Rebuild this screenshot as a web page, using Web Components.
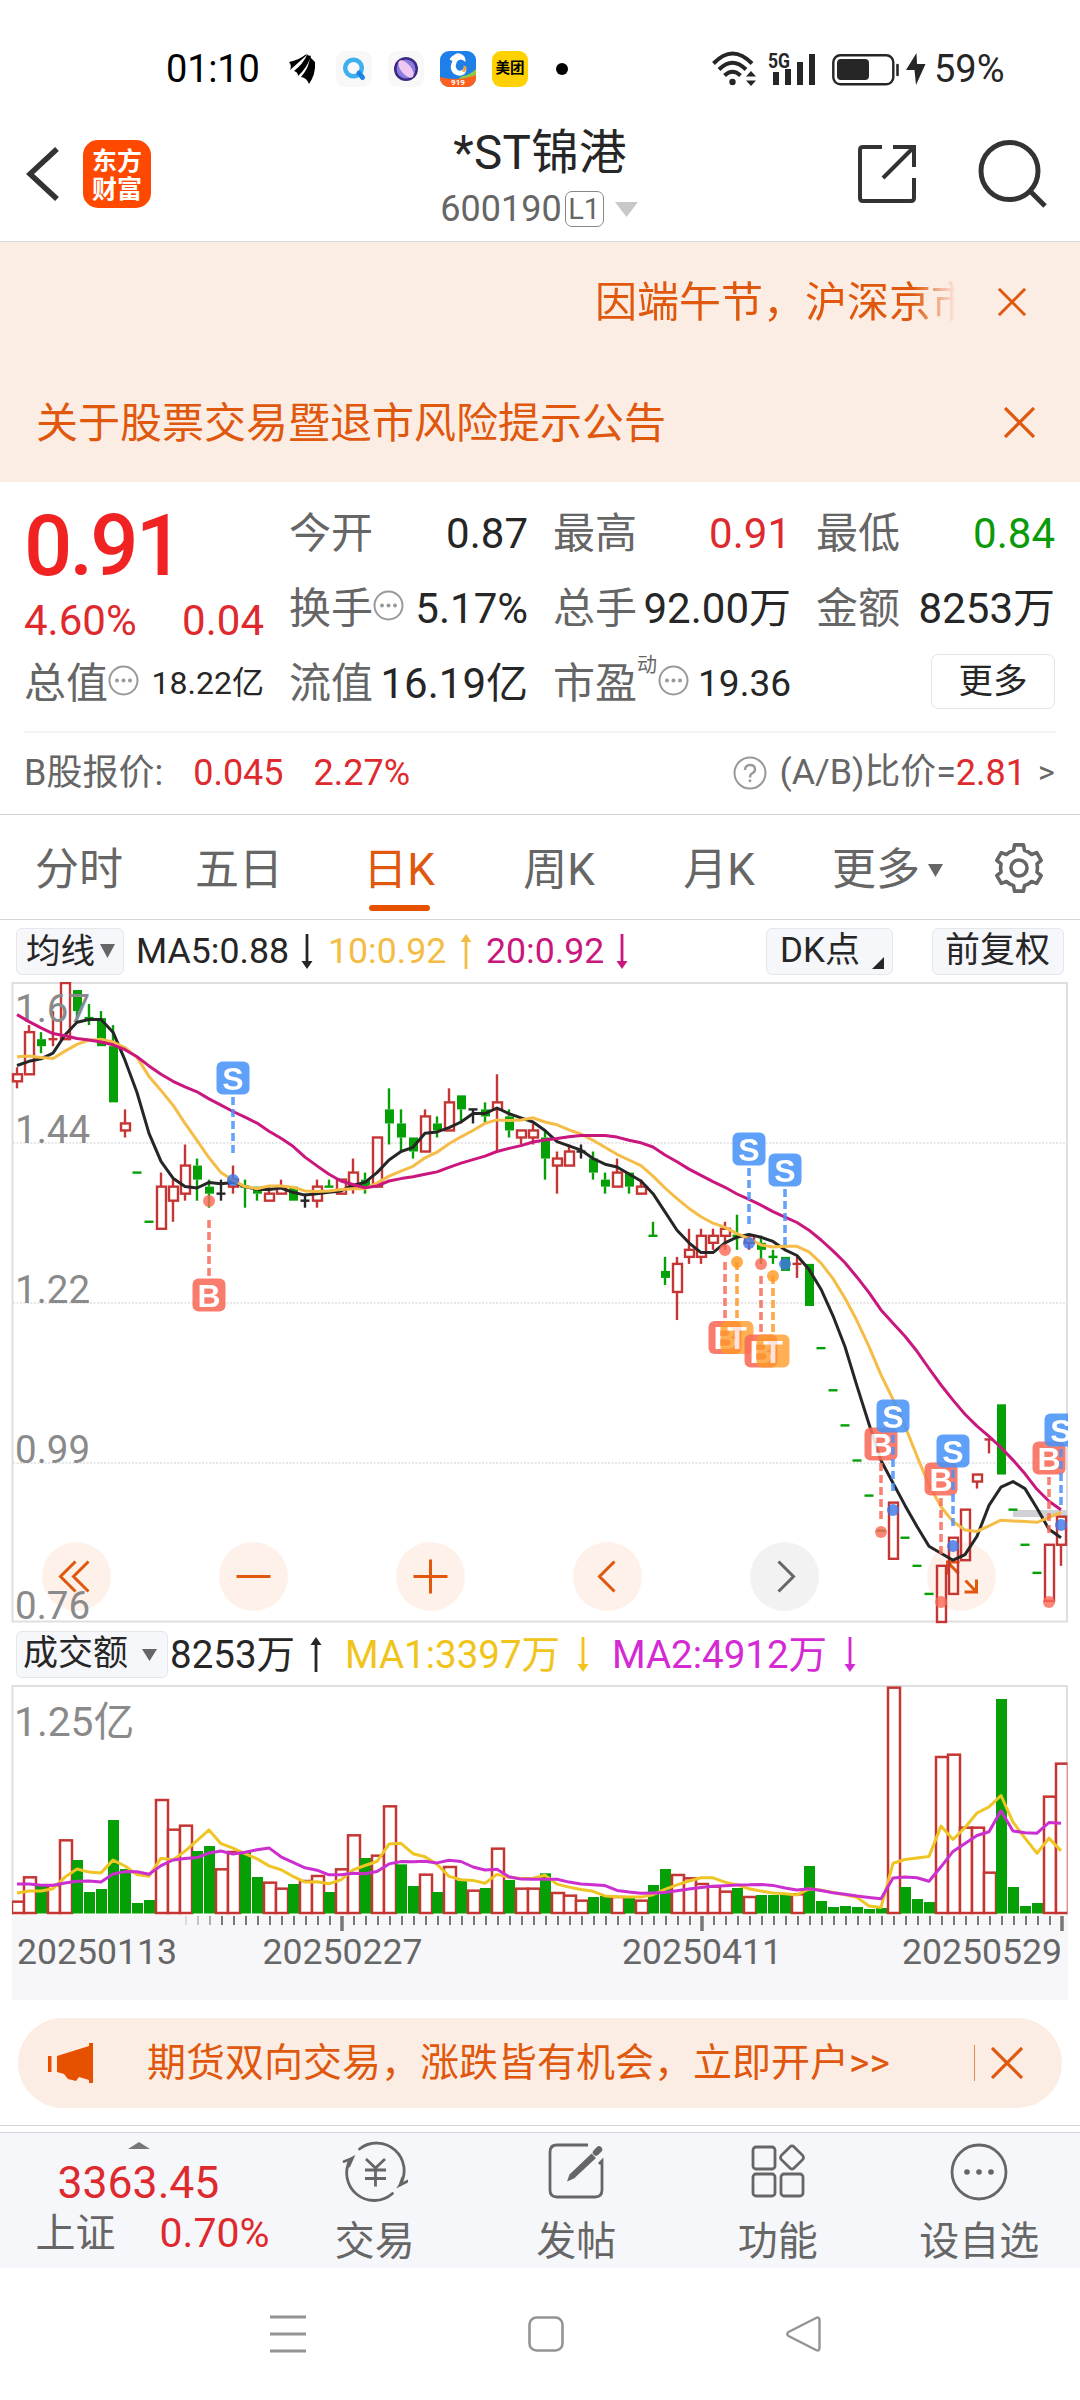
<!DOCTYPE html>
<html lang="zh-CN">
<head>
<meta charset="utf-8">
<title>*ST锦港 600190</title>
<style>
    html, body {
        margin: 0;
        padding: 0;
    }

    body {
        width: 1080px;
        height: 2400px;
        overflow: hidden;
        background: #fff;
        color: #262626;
        font-family: Roboto, "Noto Sans CJK SC", sans-serif;
        font-size: 42px;
        line-height: 1.17;
        --red: #de2a2e;
        --orange: #df580d;
        --gray: #666;
        --peach: #fcede4;
    }
</style>
</head>
<body>
<stock-page></stock-page>

<script>
// every element goes through here: open shadow root + its own markup
class BaseElement extends HTMLElement {
    constructor() {
        super();
        this.shadowDOM = this.attachShadow({ mode: 'open' });
    }

    connectedCallback() {
        this.shadowDOM.innerHTML = this.render();
    }
}

class StatusBar extends BaseElement {
    render() {
        return `
            <style>
                :host {
                    display: flex;
                    align-items: center;
                    height: 74px;
                    padding: 32px 74px 0 166px;
                    color: #000;
                }
                .time { width: 123px; font-size: 38px; letter-spacing: -0.2px; white-space: nowrap; }
                .app {
                    width: 36px;
                    height: 36px;
                    margin-left: 16px;
                    border-radius: 9px;
                    background: #f8f8f9;
                    overflow: hidden;
                }
                .first { margin-left: 20px; }
                .app svg { display: block; }
                .meituan {
                    background: #ffd100;
                    font-size: 14.5px;
                    font-weight: 700;
                    line-height: 36px;
                    text-align: center;
                }
                .dot { width: 12px; height: 12px; margin-left: 28px; border-radius: 50%; background: #000; }
                .right { display: flex; align-items: center; margin-left: auto; color: #262626; }
                .signal { margin-left: 10px; overflow: visible; }
                .battery { margin-left: 16px; }
                .bolt { margin-left: 6px; }
                .percent { width: 72px; margin-left: 8px; font-size: 38px; white-space: nowrap; }
            </style>
            <span class="time">01:10</span>
            <svg width="27" height="30" viewBox="0 0 27 30" fill="#000">
                <path d="M0 8Q10 6 16 1L19 0Q10 8 1 16Q3 11 0 8Z"/>
                <path d="M5 17Q14 10 18 1L22 2Q18 14 9 22Q9 18 5 17Z"/>
                <path d="M12 23Q20 14 21 3L26 8Q27 20 20 30Q18 24 12 23Z"/>
            </svg>
            <span class="app first">
                <svg width="36" height="36" viewBox="0 0 36 36">
                    <circle cx="17.500" cy="17" r="8.300" fill="none" stroke="#3fb0ee" stroke-width="4.500"/>
                    <path d="M23 22L26.500 26.500" stroke="#1f83e6" stroke-width="5" stroke-linecap="round"/>
                </svg>
            </span>
            <span class="app">
                <svg width="36" height="36" viewBox="0 0 36 36">
                    <circle cx="18" cy="18" r="12" fill="#3b2a80"/>
                    <circle cx="18" cy="18" r="9.500" fill="#8a7be0"/>
                    <ellipse cx="18" cy="18" rx="5" ry="10.500" fill="#f0c9f2" transform="rotate(-40 18 18)"/>
                </svg>
            </span>
            <span class="app">
                <svg width="36" height="36" viewBox="0 0 36 36">
                    <rect width="36" height="36" fill="#1f7fe8"/>
                    <path d="M22 25Q30 24 36 18V30H16Z" fill="#8fc64a"/>
                    <path d="M0 26Q18 31 36 24V36H0Z" fill="#ff5f1f"/>
                    <path d="M9.500 8.500Q11 5 14 4Q17 1 21 3Q26 5 25.500 11Q21 6.500 17.500 10Q14 15 17.500 19Q22 21.500 25 15Q28 19 24.500 23Q19 26.500 13.500 22.500Q8.500 17 12.500 10Q11 9 9.500 8.500Z" fill="#fff"/>
                    <path d="M23.500 14.500L26.500 15.500Q26.500 19 24.500 21.500L22 20Q24 18 23.500 14.500Z" fill="#f5a13c"/>
                    <text x="18" y="34" fill="#fff" font-size="8" font-weight="700" text-anchor="middle">919</text>
                </svg>
            </span>
            <span class="app meituan">美团</span>
            <span class="dot"></span>
            <div class="right">
                <svg width="46" height="36" viewBox="0 0 46 36" fill="none" stroke="#262626" stroke-width="4">
                    <path d="M1.500 12.500Q20.500 -7.500 40 12.500"/>
                    <path d="M7 18.500Q20.500 5 34 18.500"/>
                    <path d="M12.500 24.500Q20.500 17 28.500 24.500"/>
                    <circle cx="20.500" cy="31" r="3.200" fill="#262626" stroke="none"/>
                    <path d="M34 25.500L39 20L44 25.500ZM34 29.500L39 35L44 29.500Z" fill="#262626" stroke="none"/>
                </svg>
                <svg class="signal" width="48" height="36" viewBox="0 0 48 36" fill="#262626">
                    <text x="0" y="16.500" font-size="20" font-weight="700" textLength="22" lengthAdjust="spacingAndGlyphs">5G</text>
                    <path d="M5 21h6v13h-6zM17 18h6v16h-6zM29 11h6v23h-6zM41 3h6v31h-6z"/>
                </svg>
                <svg class="battery" width="68" height="36" viewBox="0 0 68 36">
                    <rect x="1.300" y="4.300" width="60" height="29" rx="7" fill="none" stroke="#262626" stroke-width="2.400"/>
                    <rect x="5" y="8" width="32" height="21" rx="4" fill="#262626"/>
                    <path d="M65.500 14V24" stroke="#262626" stroke-width="2.600" stroke-linecap="round"/>
                </svg>
                <svg class="bolt" width="20" height="32" viewBox="0 0 20 32">
                    <path d="M10.500 0L0 17H8.500L10 32L19.500 11H11Z" fill="#262626"/>
                </svg>
                <span class="percent">59%</span>
            </div>
        `;
    }
}
customElements.define('status-bar', StatusBar);

class StockHeader extends BaseElement {
    render() {
        return `
            <style>
                :host {
                    display: grid;
                    grid-template-columns: 1fr auto 1fr;
                    align-items: center;
                    height: 135px;
                    border-bottom: 1px solid #d8d8d8;
                }
                .left { display: flex; align-items: center; padding-left: 26px; gap: 23px; }
                .logo {
                    width: 68px;
                    height: 60px;
                    padding-top: 8px;
                    border-radius: 15px;
                    background: #ff4800;
                    color: #fff;
                    font-size: 25px;
                    font-weight: 700;
                    line-height: 28px;
                    text-align: center;
                }
                .title { padding-top: 15px; text-align: center; line-height: 56px; white-space: nowrap; }
                .name { font-size: 47.5px; letter-spacing: 0.3px; }
                .code { display: flex; align-items: center; justify-content: center; height: 56px; margin-left: -2px; color: var(--gray); font-size: 36px; }
                .level {
                    width: 37px;
                    height: 34px;
                    margin-left: 3px;
                    border: 1.5px solid #888;
                    border-radius: 7px;
                    font-size: 29px;
                    line-height: 35px;
                    text-align: center;
                }
                .code svg { margin: 0 0 0 11px; }
                .right { display: flex; align-items: center; justify-content: flex-end; gap: 62px; padding-right: 33px; }
            </style>
            <div class="left">
                <svg width="34" height="54" viewBox="0 0 34 54"><path d="M31 2L4 27L31 52" fill="none" stroke="#333" stroke-width="5.500"/></svg>
                <div class="logo">东方<br>财富</div>
            </div>
            <div class="title">
                <div class="name">*ST锦港</div>
                <div class="code">
                    <span>600190</span><span class="level">L1</span>
                    <svg width="23" height="15" viewBox="0 0 23 15"><path d="M0 0H23L11.500 15Z" fill="#c8c8c8"/></svg>
                </div>
            </div>
            <div class="right">
                <svg width="58" height="58" viewBox="0 0 58 58" fill="none" stroke="#333" stroke-width="4">
                    <path d="M24 2H5Q2 2 2 5V53Q2 56 5 56H53Q56 56 56 53V33"/>
                    <path d="M35 2H56V22M56 2L25 33"/>
                </svg>
                <svg width="69" height="69" viewBox="0 0 69 69" fill="none" stroke="#333" stroke-width="5">
                    <circle cx="31.500" cy="32" r="28.500"/>
                    <path d="M52 52L67 67"/>
                </svg>
            </div>
        `;
    }
}
customElements.define('stock-header', StockHeader);

class NoticeRow extends BaseElement {
    render() {
        const scrolling = this.hasAttribute('scrolling');
        const s = scrolling ? 28 : 31;
        return `
            <style>
                :host {
                    display: flex;
                    align-items: center;
                    height: 120px;
                    background: var(--peach);
                    color: var(--orange);
                }
                .text { flex: none; white-space: nowrap; overflow: hidden; line-height: 60px; }
                .plain { width: 800px; margin-left: 36px; padding-top: 4px; }
                /* the marquee fades out at its right edge */
                .scrolling {
                    width: 360px;
                    margin-left: 595px;
                    padding-top: 2px;
                    -webkit-mask-image: linear-gradient(to right, #000 318px, transparent 362px);
                    mask-image: linear-gradient(to right, #000 318px, transparent 362px);
                }
                svg { margin-left: auto; margin-right: ${scrolling ? 54 : 45}px; }
            </style>
            <div class="text ${scrolling ? 'scrolling' : 'plain'}"><slot></slot></div>
            <svg width="${s}" height="${s}" viewBox="0 0 30 30"><path d="M1 1L29 29M29 1L1 29" stroke="#df580d" stroke-width="3.200"/></svg>
        `;
    }
}
customElements.define('notice-row', NoticeRow);

class InfoDots extends BaseElement {
    render() {
        return `
            <style>
                :host { display: block; width: 31px; height: 31px; }
                svg { display: block; }
            </style>
            <svg width="31" height="31" viewBox="0 0 31 31" fill="#999">
                <circle cx="15.500" cy="15.500" r="14" fill="none" stroke="#999" stroke-width="2"/>
                <circle cx="9" cy="15.500" r="2"/><circle cx="15.500" cy="15.500" r="2"/><circle cx="22" cy="15.500" r="2"/>
            </svg>
        `;
    }
}
customElements.define('info-dots', InfoDots);

class QuoteCell extends BaseElement {
    render() {
        const value = this.getAttribute('value');
        const color = this.getAttribute('color') || '#262626';
        const size = this.getAttribute('size') || 42;
        return `
            <style>
                :host { display: flex; align-items: center; height: 75px; white-space: nowrap; }
                .label { color: var(--gray); }
                .value { margin-left: auto; color: ${color}; font-size: ${size}px; }
            </style>
            <span class="label">${this.getAttribute('label')}</span>
            <slot></slot>
            <span class="value">${value}</span>
        `;
    }
}
customElements.define('quote-cell', QuoteCell);

class QuotePanel extends BaseElement {
    render() {
        return `
            <style>
                :host { display: block; height: 333px; border-bottom: 1px solid #d5d5d5; box-sizing: border-box; }
                .grid {
                    display: grid;
                    grid-template-columns: 240px 239px 238px 239px;
                    column-gap: 25px;
                    height: 225px;
                    padding: 14px 24px 0 24px;
                }
                .price {
                    height: 98px;
                    color: #f02222;
                    font-size: 85px;
                    font-weight: 500;
                    line-height: 100px;
                    letter-spacing: -2.8px;
                }
                .change { display: flex; justify-content: space-between; align-items: center; height: 54px; margin-bottom: -2px; color: var(--red); }
                .sup { align-self: flex-start; margin: 7px 1px 0 0; font-size: 20px; line-height: 24px; color: var(--gray); }
                info-dots { margin-top: -6px; }
                .more { display: flex; justify-content: flex-end; align-items: center; height: 75px; }
                .more span {
                    width: 122px;
                    height: 53px;
                    border: 1.5px solid #e4e4e6;
                    border-radius: 7px;
                    font-size: 34.5px;
                    line-height: 53px;
                    margin-top: -4px;
                    text-align: center;
                }
                .ratio {
                    display: flex;
                    align-items: center;
                    height: 80px;
                    margin: 10px 24px 0;
                    border-top: 2px solid #f3f3f3;
                    color: var(--gray);
                    font-size: 36px;
                    white-space: nowrap;
                }
                .ratio b { color: var(--red); font-weight: 400; }
                .b1 { margin-left: 30px; }
                .b2 { margin-left: 30px; }
                .ratio svg { margin: 0 12px 0 auto; }
                .ab { font-size: 35.8px; }
                .gt { width: 18px; margin-left: 12px; font-size: 32px; }
            </style>
            <div class="grid">
                <div>
                    <div class="price">0.91</div>
                    <div class="change"><span>4.60%</span><span>0.04</span></div>
                    <quote-cell label="总值" value="18.22亿" size="32"><info-dots></info-dots></quote-cell>
                </div>
                <div>
                    <quote-cell label="今开" value="0.87"></quote-cell>
                    <quote-cell label="换手" value="5.17%"><info-dots></info-dots></quote-cell>
                    <quote-cell label="流值" value="16.19亿"></quote-cell>
                </div>
                <div>
                    <quote-cell label="最高" value="0.91" color="#de2a2e"></quote-cell>
                    <quote-cell label="总手" value="92.00万"></quote-cell>
                    <quote-cell label="市盈" value="19.36" size="37"><span class="sup">动</span><info-dots></info-dots></quote-cell>
                </div>
                <div>
                    <quote-cell label="最低" value="0.84" color="#0a9a0a"></quote-cell>
                    <quote-cell label="金额" value="8253万"></quote-cell>
                    <div class="more"><span>更多</span></div>
                </div>
            </div>
            <div class="ratio">
                <span>B股报价:</span><b class="b1">0.045</b><b class="b2">2.27%</b>
                <svg width="34" height="34" viewBox="0 0 34 34" fill="none" stroke="#999" stroke-width="2">
                    <circle cx="17" cy="17" r="15.500"/>
                    <path d="M12 14Q12 9 17 9Q22 9 22 13.500Q22 16 19 17.500Q17 18.500 17 21.500M17 23.500V26" stroke-width="2.400"/>
                </svg>
                <span class="ab">(A/B)比价=</span><b>2.81</b><span class="gt">&gt;</span>
            </div>
        `;
    }
}
customElements.define('quote-panel', QuotePanel);

class PeriodTabs extends BaseElement {
    gear() {
        const pts = [];
        for (let k = 0; k < 6; k++) {
            const a = k * 60 - 90;
            [[-31, 18.5], [-17, 18.5], [-11, 23.5], [11, 23.5], [17, 18.5], [29, 18.5]].forEach(([d, r]) => {
                const t = (a + d) * Math.PI / 180;
                pts.push((26 + r * Math.cos(t)).toFixed(1) + ',' + (26 + r * Math.sin(t)).toFixed(1));
            });
        }
        return pts.join(' ');
    }

    render() {
        return `
            <style>
                :host {
                    display: flex;
                    height: 104px;
                    border-bottom: 1px solid #d5d5d5;
                    color: var(--gray);
                    font-size: 44px;
                }
                .tab {
                    display: flex;
                    flex-direction: column;
                    align-items: center;
                    width: 160px;
                    line-height: 60px;
                    padding-top: 25px;
                    white-space: nowrap;
                }
                .tab:first-of-type { margin-left: -1px; }
                .active { color: var(--orange); }
                .active::after {
                    content: "";
                    width: 61px;
                    height: 6px;
                    margin-top: 5px;
                    border-radius: 3px;
                    background: #e65100;
                }
                .last { flex-direction: row; align-items: center; width: 114px; height: 60px; padding-left: 33px; gap: 8px; }
                .last svg { flex: none; }
                .gear { margin: 27px 0 0 47px; }
            </style>
            <div class="tab">分时</div>
            <div class="tab">五日</div>
            <div class="tab active">日K</div>
            <div class="tab">周K</div>
            <div class="tab">月K</div>
            <div class="tab last">更多<svg width="15" height="13" viewBox="0 0 15 13"><path d="M0 0H15L7.500 13Z" fill="#666"/></svg></div>
            <svg class="gear" width="52" height="52" viewBox="0 0 52 52" fill="none" stroke="#666" stroke-width="3.600" stroke-linejoin="round">
                <polygon points="${this.gear()}"/>
                <circle cx="26" cy="26" r="8"/>
            </svg>
        `;
    }
}
customElements.define('period-tabs', PeriodTabs);

// thin arrow behind each indicator value
class TrendArrow extends BaseElement {
    render() {
        const up = this.getAttribute('dir') === 'up';
        return `
            <style>
                :host { display: block; width: 12px; height: 35px; }
                svg { display: block; ${up ? 'transform: rotate(180deg);' : ''} }
            </style>
            <svg width="12" height="35" viewBox="0 0 12 35"><path d="M6 0V28" stroke="currentColor" stroke-width="2.800"/><path d="M0.500 27H11.500L6 35Z" fill="currentColor"/></svg>
        `;
    }
}
customElements.define('trend-arrow', TrendArrow);

class ChipButton extends BaseElement {
    render() {
        return `
            <style>
                :host {
                    display: flex;
                    align-items: center;
                    box-sizing: border-box;
                    flex: none;
                    height: 47px;
                    border: 1.5px solid #e4e6ec;
                    border-radius: 6px;
                    background: #f6f7fb;
                    color: #262626;
                    font-size: 35px;
                    white-space: nowrap;
                }
            </style>
            <slot></slot>
        `;
    }
}
customElements.define('chip-button', ChipButton);

class MaLegend extends BaseElement {
    render() {
        return `
            <style>
                :host { display: flex; align-items: center; height: 62px; font-size: 35.7px; white-space: nowrap; }
                .ma { display: flex; align-items: center; padding-top: 2px; }
                .m5 { width: 177px; margin-left: 12px; }
                .m10 { width: 144px; margin-left: 15px; color: #f3bd45; }
                .m20 { width: 142px; margin-left: 14px; color: #c9177e; }
                trend-arrow { margin-left: auto; }
                .avg { width: 108px; margin-left: 16px; padding-left: 9px; box-sizing: border-box; font-size: 34.5px; }
                .avg svg { margin-left: 5px; }
                .dk { width: 127px; margin-left: auto; padding-left: 13px; }
                .dk svg { align-self: flex-end; margin: 0 0 5px 12px; }
                .fq { width: 132px; margin: 0 16px 0 39px; padding-left: 12px; }
            </style>
            <chip-button class="avg">均线<svg width="15" height="14" viewBox="0 0 15 14"><path d="M0 0H15L7.500 14Z" fill="#666"/></svg></chip-button>
            <span class="ma m5">MA5:0.88<trend-arrow></trend-arrow></span>
            <span class="ma m10">10:0.92<trend-arrow dir="up"></trend-arrow></span>
            <span class="ma m20">20:0.92<trend-arrow></trend-arrow></span>
            <chip-button class="dk">DK点<svg width="12" height="12" viewBox="0 0 12 12"><path d="M12 0V12H0Z" fill="#262626"/></svg></chip-button>
            <chip-button class="fq">前复权</chip-button>
        `;
    }
}
customElements.define('ma-legend', MaLegend);

// price candles, one row per day: colour, open/close top, open/close bottom, high, low (in cents)
const CANDLES = [
    'r154 153 155 152', 'r160 154 161 154', 'g159 158 160 157', 'r159 159 163 158', 'r167 159 167 159',
    'g166 163 166 162', 'g162 162 164 161', 'g162 158 163 158', 'g158 150 161 150', 'r147 146 149 145',
    'g140 140 140 140', 'g133 133 133 133', 'r138 132 140 132', 'r138 136 139 133', 'r141 137 144 136',
    'g141 139 142 136', 'g138 137 139 135', 'k137 137 139 136', 'r139 138 141 137', 'g138 138 139 135',
    'g138 137 138 136', 'r137 136 138 136', 'r138 137 139 137', 'g138 136 138 136', 'k136 136 137 135',
    'r138 136 139 135', 'g138 138 139 138', 'r139 137 139 137', 'r140 138 142 137', 'g139 138 140 137',
    'r145 138 145 138', 'g149 147 152 144', 'g147 145 149 143', 'g145 143 145 142', 'r148 143 149 143',
    'g147 146 148 145', 'r150 146 152 146', 'g151 149 151 147', 'k149 149 149 147', 'g149 148 150 147',
    'r150 149 154 143', 'g148 146 149 145', 'r146 145 146 144', 'r146 145 147 144', 'g145 142 146 139',
    'r142 141 143 137', 'r143 141 144 141', 'k143 143 144 142', 'g142 140 143 139', 'g139 138 140 137',
    'r140 138 142 138', 'g140 138 140 137', 'r138 137 139 137', 'g131 131 133 131', 'g126 125 128 124',
    'r127 123 128 119', 'r129 128 132 127', 'r131 128 132 127', 'r131 130 132 129', 'r132 131 133 129',
    'g131 131 134 129', 'r131 130 131 129', 'g130 129 131 127', 'g128 128 129 127', 'g128 126 128 126',
    'r127 127 128 125', 'g127 121 127 121', 'g115 115 115 115', 'g109 109 109 109', 'g104 104 104 104',
    'g99 99 99 99', 'g94 94 94 94', 'g89 89 89 89', 'r93 85 93 85', 'g88 88 88 88',
    'g84 84 84 84', 'g80 80 80 80', 'r84 76 84 76', 'r88 80 88 80', 'r92 84.8 92 84.8',
    'r97 96 97 95', 'r102 102 102 100', 'g107 97 107 97', 'g92 92 92 92', 'g87 87 87 87',
    'g83 83 83 83', 'r87 79 87 79', 'r91 87 91 84'
].map(s => {
    const [top, bottom, high, low] = s.slice(1).split(' ').map(Number);
    return { color: s[0], top, bottom, high, low, close: s[0] === 'g' ? bottom : top };
});

// averages that start before the visible window
const MA5_HEAD = [155.25, 155.85, 156.2, 157];
const MA10_HEAD = [156.5, 156.6, 156.4, 156.25, 157.3, 158.25, 158.85, 159, 158.6];
const MA20_HEAD = [162.5, 161.5, 160.6, 159.8, 159.5, 159.1, 158.9, 158.6, 158.2, 157.5, 156.5, 155.2, 154, 153, 152.2, 151.5, 150.5, 149.6, 148.7];

function average(values, n, head) {
    return values.map((v, i) => {
        if (i < n - 1) return head[i];
        let sum = 0;
        for (let j = i - n + 1; j <= i; j++) sum += values[j];
        return sum / n;
    });
}

const dayX = i => 17 + i * 12;
const COLORS = { r: '#c43533', g: '#05a005', k: '#262626' };

function line(values, y, color) {
    const pts = values.map((v, i) => `${dayX(i)},${y(v).toFixed(1)}`).join(' ');
    return `<polyline points="${pts}" fill="none" stroke="${color}" stroke-width="3" stroke-linejoin="round"/>`;
}

class KChart extends BaseElement {
    candles(y) {
        return CANDLES.map((c, i) => {
            const x = dayX(i);
            const color = COLORS[c.color];
            const top = y(c.top);
            const bottom = y(c.bottom);
            let out = '';
            if (c.top === c.bottom) {
                out += `<path d="M${x - 4.5} ${top}H${x + 4.5}" stroke="${color}" stroke-width="2.400"/>`;
            } else if (c.color === 'g') {
                out += `<rect x="${x - 4}" y="${top}" width="9" height="${bottom - top}" fill="${color}"/>`;
            } else {
                out += `<rect x="${x - 4}" y="${top}" width="9" height="${bottom - top}" fill="none" stroke="${color}" stroke-width="2.400"/>`;
            }
            if (c.high > c.top) out += `<path d="M${x} ${y(c.high)}V${top}" stroke="${color}" stroke-width="2.400"/>`;
            if (c.low < c.bottom) out += `<path d="M${x} ${bottom}V${y(c.low)}" stroke="${color}" stroke-width="2.400"/>`;
            return out;
        }).join('');
    }

    // [letter, day, badge centre, dash from, dash to, dot]
    marks() {
        const fills = { S: '#4a93f8', B: '#fa6a58', T: '#ff9a26' };
        return [
            ['S', 18, 1078, 1097, 1154, 1180], ['B', 16, 1295, 1220, 1277, 1201],
            ['B', 59, 1337.5, 1262, 1318, 1250], ['T', 60, 1337.5, 1262, 1318, 1262],
            ['S', 61, 1149, 1168, 1224, 1243], ['B', 62, 1351, 1276, 1332, 1264],
            ['T', 63, 1351, 1276, 1332, 1276], ['S', 64, 1170, 1189, 1245, 1264],
            ['B', 72, 1444, 1463, 1519, 1532], ['S', 73, 1416, 1435, 1491, 1510],
            ['B', 77, 1479, 1498, 1554, 1602], ['S', 78, 1451, 1470, 1526, 1546],
            ['B', 86, 1458, 1477, 1533, 1602], ['S', 87, 1430, 1449, 1505, 1525]
        ].map(([letter, day, cy, from, to, dot]) => {
            const x = dayX(day);
            const fill = fills[letter];
            return `
                <path d="M${x} ${from}V${to}" stroke="${fill}" stroke-width="3.600" stroke-dasharray="8 4" opacity=".85"/>
                <circle cx="${x}" cy="${dot}" r="6" fill="${letter === 'S' ? '#3f78e8' : fill}" opacity=".82"/>
                <g opacity="${letter === 'T' ? 0.78 : 0.88}">
                    <rect x="${x - 16.500}" y="${cy - 16.500}" width="33" height="33" rx="6" fill="${fill}"/>
                    <text x="${x}" y="${cy + 11.500}" fill="#fff" font-size="32" font-weight="700" text-anchor="middle" font-family="Liberation Sans, Arial, sans-serif">${letter}</text>
                </g>
            `;
        }).join('');
    }

    buttons() {
        const icons = [
            'M-1 -15L-16 0L-1 15M12 -15L-3 0L12 15', 'M-17 0H17', 'M-17 0H17M0 -17V17', 'M7 -15L-8 0L7 15', 'M-6 -15L9 0L-6 15',
            'M-14 -2V-14.500H-2M-14 -14.500L-3 -3M15 3V15.500H3M15 15.500L4 4'
        ];
        return icons.map((d, i) => {
            const off = i === 4;
            return `
                <g transform="translate(${76.5 + i * 177} 1576.500)">
                    <circle r="34.500" fill="${off ? '#f2f2f2' : '#fef1e9'}"/>
                    <path d="${d}" fill="none" stroke="${off ? '#666' : '#df580d'}" stroke-width="3"/>
                </g>
            `;
        }).join('');
    }

    render() {
        const y = p => 983 + (167 - p) * 7.022;
        const closes = CANDLES.map(c => c.close);
        const labels = [['1.67', 1021.500], ['1.44', 1142.500], ['1.22', 1303], ['0.99', 1463], ['0.76', 1619]];
        return `
            <style>
                :host { display: block; height: 642px; }
                svg { display: block; overflow: visible; }
            </style>
            <svg width="1080" height="642" viewBox="0 982 1080 642">
                <defs><clipPath id="panel"><rect x="11" y="982" width="1057" height="642"/></clipPath></defs>
                <path d="M13 1143H1067M13 1303H1067M13 1463H1067" stroke="#dedede" stroke-width="1.500" stroke-dasharray="2 1.500"/>
                <rect x="12.500" y="983" width="1054.500" height="638.500" fill="none" stroke="#dfdfdf" stroke-width="2"/>
                ${this.buttons()}
                <rect x="1013" y="1510" width="54" height="7" fill="#cfd1d5"/>
                <g clip-path="url(#panel)">
                    ${this.candles(y)}
                    <g fill="#8a8a8a" font-size="38.500">${labels.map(([t, ty]) => `<text x="15" y="${ty}">${t}</text>`).join('')}</g>
                    ${line(average(closes, 5, MA5_HEAD), y, '#262626')}
                    ${line(average(closes, 10, MA10_HEAD), y, '#f5bd47')}
                    ${line(average(closes, 20, MA20_HEAD), y, '#c9177e')}
                    ${this.marks()}
                </g>
            </svg>
        `;
    }
}
customElements.define('k-chart', KChart);

class VolumeLegend extends BaseElement {
    render() {
        return `
            <style>
                :host { display: flex; align-items: center; height: 61px; font-size: 38.5px; white-space: nowrap; }
                .item { display: flex; align-items: center; }
                .v { width: 152px; margin-left: 2px; }
                .m1 { width: 244px; margin-left: 23px; color: #f0c41b; }
                .m2 { width: 244px; margin-left: 23px; color: #d42ad4; }
                trend-arrow { margin-left: auto; }
                .name { width: 152px; margin-left: 16px; padding-left: 6px; }
                .name svg { margin-left: 14px; }
            </style>
            <chip-button class="name">成交额<svg width="15" height="12" viewBox="0 0 15 12"><path d="M0 0H15L7.500 12Z" fill="#666"/></svg></chip-button>
            <span class="item v">8253万<trend-arrow dir="up"></trend-arrow></span>
            <span class="item m1">MA1:3397万<trend-arrow></trend-arrow></span>
            <span class="item m2">MA2:4912万<trend-arrow></trend-arrow></span>
        `;
    }
}
customElements.define('volume-legend', VolumeLegend);

// turnover bars, unit is 1/682 of the 1.25亿 axis
const VOLUMES = [
    'r40', 'r113', 'g87', 'r89', 'r224', 'g162', 'g66', 'g75', 'g282', 'g135', 'g33', 'g42', 'r345', 'r256', 'r268',
    'g189', 'g204', 'r137', 'r189', 'g187', 'g111', 'r97', 'r79', 'g90', 'r102', 'r117', 'g66', 'r137', 'r239', 'g168',
    'r178', 'r326', 'g149', 'g84', 'r121', 'g66', 'r144', 'g100', 'r73', 'g78', 'r199', 'g102', 'r79', 'r79', 'g122',
    'r66', 'r58', 'r43', 'g51', 'g54', 'r54', 'g51', 'r43', 'g87', 'g135', 'r120', 'r110', 'r93', 'r85', 'r70',
    'g78', 'r54', 'g57', 'g57', 'g57', 'r62', 'g144', 'g39', 'g21', 'g24', 'g21', 'g15', 'g18', 'r682', 'g81',
    'g45', 'g36', 'r474', 'r481', 'r262', 'r262', 'r127', 'g645', 'g81', 'g24', 'g33', 'r355', 'r454'
];

class VolumeChart extends BaseElement {
    ticks() {
        let out = '';
        for (let i = 0; i <= 73; i++) {
            const x = 186 + i * 12;
            const major = [13, 43, 73].includes(i);
            out += `<path d="M${x} 1916V${major ? 1931 : 1925}" stroke="#777" stroke-width="${major ? 3.5 : 2}" opacity="${i < 3 ? 0.2 + i * 0.2 : 1}"/>`;
        }
        return out;
    }

    render() {
        const y = v => 1914 - v / 3;
        const values = VOLUMES.map(v => Number(v.slice(1)));
        const bars = VOLUMES.map((v, i) => {
            const x = dayX(i);
            const top = y(values[i]);
            return v[0] === 'g'
                ? `<rect x="${x - 5}" y="${top}" width="11" height="${1913.5 - top}" fill="#05a005"/>`
                : `<rect x="${x - 5}" y="${top + 1}" width="12" height="${1912 - top}" fill="#fff" stroke="#c43533" stroke-width="2.500"/>`;
        }).join('');
        return `
            <style>
                :host { display: block; height: 315px; }
                svg { display: block; }
            </style>
            <svg width="1080" height="315" viewBox="0 1685 1080 315">
                <defs><clipPath id="panel"><rect x="12" y="1685" width="1055.500" height="230"/></clipPath></defs>
                <rect x="12" y="1915" width="1056" height="85" fill="#f7f7fa"/>
                <path d="M12.500 1915V1686H1067V1915" fill="none" stroke="#dfdfdf" stroke-width="2"/>
                <text x="14" y="1736" fill="#8a8a8a" font-size="40.800">1.25亿</text>
                <g clip-path="url(#panel)">
                    ${bars}
                    ${line(average(values, 5, [63, 69, 69, 76]), y, '#efc524')}
                    ${line(average(values, 10, [90, 90, 86, 86, 93, 98, 99, 96, 120]), y, '#cc2fd0')}
                </g>
                ${this.ticks()}
                <g fill="#666" font-size="35.600">
                    <text x="17" y="1964">20250113</text>
                    <text x="342.500" y="1964" text-anchor="middle">20250227</text>
                    <text x="702" y="1964" text-anchor="middle">20250411</text>
                    <text x="1062" y="1964" text-anchor="end">20250529</text>
                </g>
            </svg>
        `;
    }
}
customElements.define('volume-chart', VolumeChart);

class AdBanner extends BaseElement {
    render() {
        return `
            <style>
                :host { display: block; padding: 18px 18px 17px; border-bottom: 1px solid #d5d5d5; }
                .pill {
                    display: flex;
                    align-items: center;
                    height: 90px;
                    padding: 0 39px 0 30px;
                    border-radius: 45px;
                    background: var(--peach);
                    color: var(--orange);
                    font-size: 39px;
                    white-space: nowrap;
                }
                .text { margin-left: 53px; padding-top: 2px; }
                .bar { width: 1.5px; height: 36px; margin: 0 16px 0 auto; background: #e08a58; }
            </style>
            <div class="pill">
                <svg width="46" height="40" viewBox="0 0 46 40" fill="#e65100"><path d="M0 13h3.500v16h-3.500zM9 13L41 3V0h4v40h-4v-3L31 34L28 38L20 36L16 31L9 29Z"/></svg>
                <span class="text"><slot></slot></span>
                <span class="bar"></span>
                <svg width="32" height="32" viewBox="0 0 32 32"><path d="M1 1L31 31M31 1L1 31" stroke="#df580d" stroke-width="3.200"/></svg>
            </div>
        `;
    }
}
customElements.define('ad-banner', AdBanner);

class NavTab extends BaseElement {
    render() {
        return `
            <style>
                :host { display: flex; flex: 1; flex-direction: column; align-items: center; color: var(--gray); font-size: 40px; }
                .icon { height: 66px; padding-top: 7px; }
                .label { line-height: 71px; }
            </style>
            <div class="icon"><slot name="icon"></slot></div>
            <div class="label"><slot></slot></div>
        `;
    }
}
customElements.define('nav-tab', NavTab);

class BottomNav extends BaseElement {
    render() {
        return `
            <style>
                :host {
                    display: flex;
                    height: 135px;
                    margin-top: 6px;
                    border-top: 1px solid #cfd2d8;
                    background: #f6f7fa;
                }
                .index { display: flex; flex-direction: column; align-items: center; width: 274px; color: var(--red); }
                .index svg { margin: 9px 0 0 3px; }
                .point { margin-left: 3px; font-size: 44.5px; line-height: 68px; }
                .row { display: flex; justify-content: space-between; width: 234px; margin-left: 31px; font-size: 41px; line-height: 33px; white-space: nowrap; }
                .row span { color: var(--gray); font-size: 40px; }
                nav-tab svg { display: block; }
            </style>
            <div class="index">
                <svg width="22" height="7" viewBox="0 0 22 7"><path d="M0 7L11 0L22 7Z" fill="#777"/></svg>
                <div class="point">3363.45</div>
                <div class="row"><span>上证</span>0.70%</div>
            </div>
            <nav-tab>
                <svg slot="icon" width="66" height="66" viewBox="0 0 66 66" fill="none" stroke="#666" stroke-width="2.800" stroke-linecap="round">
                    <path d="M17.500 9A27.500 27.500 0 0 1 58 45L66 41M58 45L60.500 38"/>
                    <path d="M50.500 53.500A27.500 27.500 0 0 1 8.500 19L2 21.500M8.500 19L10.500 18L7 26"/>
                    <path d="M24 19L33.500 28L43 19M23 30H44M23 38.500H44M33.500 28V46.500" stroke-linecap="butt"/>
                </svg>
                交易
            </nav-tab>
            <nav-tab>
                <svg slot="icon" width="56" height="66" viewBox="0 0 56 66" fill="none" stroke="#666" stroke-width="2.800">
                    <path d="M40 5H9Q2 5 2 12V50Q2 57 9 57H47Q54 57 54 50V21L51 24"/>
                    <path d="M43.500 13.500L48 18L26 38.500L19 41.500L21.500 34.500Z" fill="#666" stroke="none"/>
                    <path d="M48 12.500L51 9.500" stroke-width="6.500" stroke-linecap="round"/>
                </svg>
                发帖
            </nav-tab>
            <nav-tab>
                <svg slot="icon" width="54" height="66" viewBox="0 0 54 66" fill="none" stroke="#666" stroke-width="2.800">
                    <rect x="2" y="7" width="22" height="22" rx="3"/>
                    <rect x="2" y="34" width="22" height="22" rx="3"/>
                    <rect x="30" y="34" width="22" height="22" rx="3"/>
                    <rect x="32" y="8.500" width="18" height="18" rx="3" transform="rotate(45 41 17.500)"/>
                </svg>
                功能
            </nav-tab>
            <nav-tab>
                <svg slot="icon" width="58" height="66" viewBox="0 0 58 66" fill="#666">
                    <circle cx="29" cy="32" r="27" fill="none" stroke="#666" stroke-width="2.800"/>
                    <circle cx="17" cy="32" r="2.800"/><circle cx="29" cy="32" r="2.800"/><circle cx="41" cy="32" r="2.800"/>
                </svg>
                设自选
            </nav-tab>
        `;
    }
}
customElements.define('bottom-nav', BottomNav);

class SystemNav extends BaseElement {
    render() {
        return `
            <style>
                :host { display: flex; align-items: center; height: 132px; padding-left: 270px; gap: 222px; }
            </style>
            <svg width="36" height="38" viewBox="0 0 36 38"><path d="M0 2H36M0 19H36M0 36H36" stroke="#949494" stroke-width="3"/></svg>
            <svg width="36" height="36" viewBox="0 0 36 36"><rect x="1.500" y="1.500" width="33" height="33" rx="7" fill="none" stroke="#949494" stroke-width="2.600"/></svg>
            <svg width="36" height="36" viewBox="0 0 36 36"><path d="M2.500 16L30 2Q33.500 0.500 33.500 4V32Q33.500 35.500 30 34L2.500 20Q0 18 2.500 16Z" fill="none" stroke="#949494" stroke-width="2.400"/></svg>
        `;
    }
}
customElements.define('system-nav', SystemNav);

class StockPage extends BaseElement {
    render() {
        return `
            <style>
                :host { display: flex; flex-direction: column; width: 1080px; }
            </style>
            <status-bar></status-bar>
            <stock-header></stock-header>
            <notice-row scrolling>因端午节，沪深京市</notice-row>
            <notice-row>关于股票交易暨退市风险提示公告</notice-row>
            <quote-panel></quote-panel>
            <period-tabs></period-tabs>
            <ma-legend></ma-legend>
            <k-chart></k-chart>
            <volume-legend></volume-legend>
            <volume-chart></volume-chart>
            <ad-banner>期货双向交易，涨跌皆有机会，立即开户&gt;&gt;</ad-banner>
            <bottom-nav></bottom-nav>
            <system-nav></system-nav>
        `;
    }
}
customElements.define('stock-page', StockPage);
</script>
</body>
</html>
